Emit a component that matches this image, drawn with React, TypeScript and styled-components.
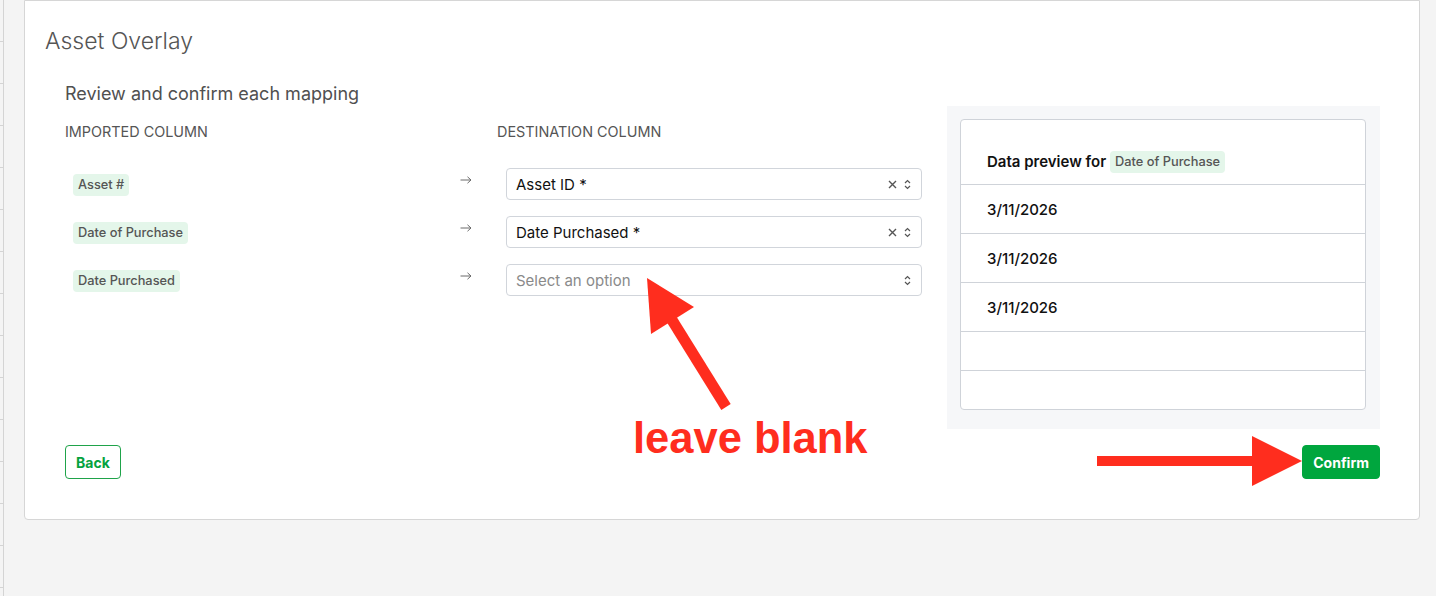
import styled, { createGlobalStyle } from 'styled-components';

const GlobalStyle = createGlobalStyle`
  html,
  body {
    margin: 0;
    padding: 0;
    height: 596px;
    overflow: hidden;
    background-color: #f4f4f4;
    font-family: Inter, 'Noto Sans', sans-serif;
  }
`;

const mappings = [
  { source: 'Asset #', destination: 'Asset ID *' },
  { source: 'Date of Purchase', destination: 'Date Purchased *' },
  { source: 'Date Purchased', destination: '' },
];

const previewRows = ['3/11/2026', '3/11/2026', '3/11/2026', '', ''];

const ArrowIcon = () => (
  <svg width="12" height="8" viewBox="0 0 12 8" fill="none">
    <path d="M0.5 4H11M7.5 0.8L11 4L7.5 7.2" stroke="#6b6b6b" strokeWidth="1" />
  </svg>
);

const ClearIcon = () => (
  <svg width="9" height="9" viewBox="0 0 9 9" fill="none">
    <path d="M1 1L8 8M8 1L1 8" stroke="#555" strokeWidth="1.4" />
  </svg>
);

const ChevronIcon = () => (
  <svg width="7" height="11" viewBox="0 0 7 11" fill="none">
    <path d="M1 4L3.5 1.5L6 4M1 7L3.5 9.5L6 7" stroke="#555" strokeWidth="1.2" />
  </svg>
);

const App = () => {
  return (
    <>
      <GlobalStyle />
      <Page>
        <Rail />
        <Card>
          <Title>Asset Overlay</Title>
          <Content>
            <Body>
              <Mapping>
                <Heading>Review and confirm each mapping</Heading>
                <ColumnHeads>
                  <ColumnHead>Imported column</ColumnHead>
                  <ColumnHead>Destination column</ColumnHead>
                </ColumnHeads>
                <Rows>
                  {mappings.map(({ source, destination }) => (
                    <Row key={source}>
                      <div>
                        <Pill>{source}</Pill>
                      </div>
                      <ArrowCell>
                        <ArrowIcon />
                      </ArrowCell>
                      <Select>
                        <SelectValue $empty={!destination}>
                          {destination || 'Select an option'}
                        </SelectValue>
                        <SelectIcons>
                          {destination && <ClearIcon />}
                          <ChevronIcon />
                        </SelectIcons>
                      </Select>
                    </Row>
                  ))}
                </Rows>
              </Mapping>
              <Preview>
                <PreviewTable>
                  <PreviewHeader>
                    Data preview for <Pill>Date of Purchase</Pill>
                  </PreviewHeader>
                  {previewRows.map((value, index) => (
                    <PreviewRow key={index} $empty={!value}>
                      {value}
                    </PreviewRow>
                  ))}
                </PreviewTable>
              </Preview>
            </Body>
            <Actions>
              <BackButton>Back</BackButton>
              <ConfirmButton>Confirm</ConfirmButton>
            </Actions>
          </Content>
        </Card>
        <Annotations width="1436" height="596" viewBox="0 0 1436 596">
          <line x1="672" y1="320" x2="726" y2="407" stroke="#ff2d1e" strokeWidth="11" />
          <polygon points="647,278 651,334 694,307" fill="#ff2d1e" />
          <rect x="1097" y="456" width="157" height="10" fill="#ff2d1e" />
          <polygon points="1252,436 1252,486 1302,461" fill="#ff2d1e" />
        </Annotations>
        <Note>leave blank</Note>
      </Page>
    </>
  );
};

export default App;

const Page = styled.div`
  position: relative;
  display: flex;
  gap: 20px;
  height: 596px;
`;

const Rail = styled.div`
  flex: none;
  width: 3px;
  height: 100%;
  border-right: 1px solid #d4d4d4;
  background: repeating-linear-gradient(
    to bottom,
    transparent 0 41px,
    #d4d4d4 41px 42px
  );
`;

const Card = styled.div`
  box-sizing: border-box;
  width: 1396px;
  align-self: flex-start;
  padding: 24px 0 40px;
  background-color: #fff;
  border: 1px solid #d6d6d6;
  border-radius: 0 0 4px 4px;
`;

const Title = styled.h1`
  margin: 0;
  padding-left: 20px;
  font-size: 23px;
  line-height: 32px;
  font-weight: 300;
  color: #555;
`;

const Content = styled.div`
  padding: 24px 39px 0 40px;
`;

const Body = styled.div`
  display: flex;
  gap: 25px;
  align-items: flex-start;
`;

const Mapping = styled.div`
  width: 857px;
`;

const Heading = styled.h2`
  margin: 0;
  padding-top: 1px;
  font-size: 18px;
  line-height: 24px;
  font-weight: 400;
  color: #505050;
`;

const ColumnHeads = styled.div`
  display: grid;
  grid-template-columns: 432px 1fr;
  margin-top: 16px;
`;

const ColumnHead = styled.div`
  font-size: 14.4px;
  line-height: 20px;
  font-weight: 400;
  text-transform: uppercase;
  color: #555;
`;

const Rows = styled.div`
  display: flex;
  flex-direction: column;
  gap: 16px;
  margin-top: 26px;
`;

const Row = styled.div`
  display: grid;
  grid-template-columns: 387px 46px 416px;
  align-items: center;
  padding-left: 8px;
`;

const Pill = styled.span`
  display: inline-block;
  padding: 3px 5px;
  font-size: 12.8px;
  line-height: 16px;
  font-weight: 500;
  color: #555;
  background-color: #e4f6ea;
  border-radius: 4px;
`;

const ArrowCell = styled.div`
  align-self: flex-start;
  margin-top: 8px;
  line-height: 0;
`;

const Select = styled.div`
  box-sizing: border-box;
  display: flex;
  align-items: center;
  justify-content: space-between;
  height: 32px;
  padding: 0 10px 0 9px;
  border: 1px solid #d1d5db;
  border-radius: 4px;
  background-color: #fff;
`;

const SelectValue = styled.span<{ $empty: boolean }>`
  font-size: 15px;
  color: ${({ $empty }) => ($empty ? '#8a8a8a' : '#111')};
`;

const SelectIcons = styled.div`
  display: flex;
  align-items: center;
  gap: 7px;
`;

const Preview = styled.div`
  box-sizing: border-box;
  width: 433px;
  margin-top: 25px;
  padding: 13px 14px 19px 13px;
  background-color: #f6f7f9;
`;

const PreviewTable = styled.div`
  background-color: #fff;
  border: 1px solid #cfd3d9;
  border-radius: 4px;
`;

const PreviewHeader = styled.div`
  box-sizing: border-box;
  display: flex;
  align-items: flex-end;
  gap: 4px;
  height: 65px;
  padding: 0 0 11px 26px;
  font-size: 15px;
  line-height: 22px;
  font-weight: 600;
  color: #111;
  border-bottom: 1px solid #cfd3d9;
`;

const PreviewRow = styled.div<{ $empty: boolean }>`
  box-sizing: border-box;
  display: flex;
  align-items: center;
  height: ${({ $empty }) => ($empty ? '39px' : '49px')};
  padding-left: 26px;
  font-size: 15px;
  font-weight: 500;
  color: #111;
  border-bottom: 1px solid #cfd3d9;

  &:last-child {
    height: 38px;
    border-bottom: none;
  }
`;

const Actions = styled.div`
  display: flex;
  justify-content: space-between;
  margin-top: 16px;
`;

const buttonBase = `
  box-sizing: border-box;
  height: 34px;
  padding: 0 10px;
  font-family: Inter, 'Noto Sans', sans-serif;
  font-size: 14px;
  font-weight: 700;
  border-radius: 4px;
  cursor: pointer;
`;

const BackButton = styled.button`
  ${buttonBase}
  color: #04a23e;
  background-color: #fff;
  border: 1px solid #1fa34a;
`;

const ConfirmButton = styled.button`
  ${buttonBase}
  color: #fff;
  background-color: #00a63e;
  border: 1px solid #00a63e;
`;

const Annotations = styled.svg`
  position: absolute;
  top: 0;
  left: 0;
  pointer-events: none;
`;

const Note = styled.div`
  position: absolute;
  top: 417px;
  left: 633px;
  font-family: 'Liberation Sans', Arial, sans-serif;
  font-size: 43.5px;
  line-height: 43px;
  font-weight: 700;
  color: #ff2d1e;
  pointer-events: none;
`;
